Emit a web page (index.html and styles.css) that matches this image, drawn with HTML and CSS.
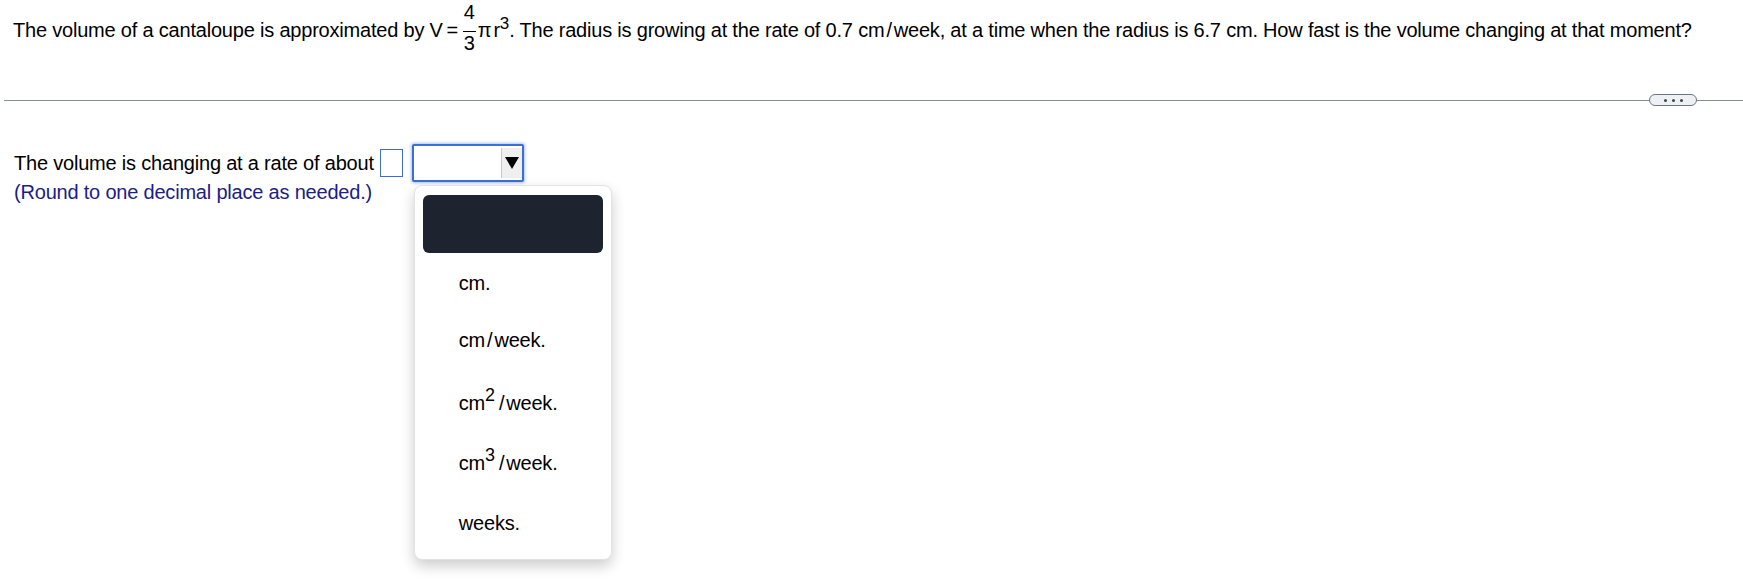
FILE: index.html
```html
<!DOCTYPE html>
<html lang="en">
<head>
<meta charset="UTF-8" />
<title>Related Rates</title>
<link rel="stylesheet" href="styles.css">
</head>
<body>
<div class="question">
  The volume of a cantaloupe is approximated by V&#8201;=&#8201;<span class="frac"><span class="num">4</span><span class="den">3</span></span><span class="pi">&pi;</span>r<sup class="sup">3</sup>. The radius is growing at the rate of 0.7 cm<span class="slash">/</span>week, at a time when the radius is 6.7 cm. How fast is the volume changing at that moment?
</div>

<div class="divider">
  <div class="rule"></div>
  <div class="more"><span></span><span></span><span></span></div>
  <div class="rule rule-end"></div>
</div>

<div class="answer">
  <div class="answer-row">
    <span>The volume is changing at a rate of about</span>
    <span class="blank"></span>
    <div class="select-wrap">
      <div class="select">
        <div class="select-btn"><span class="tri"></span></div>
      </div>
      <div class="menu">
        <div class="menu-active"></div>
        <div class="menu-item">cm.</div>
        <div class="menu-item">cm<span class="slash">/</span>week.</div>
        <div class="menu-item">cm<sup>2</sup><span class="slash">/</span>week.</div>
        <div class="menu-item">cm<sup>3</sup><span class="slash">/</span>week.</div>
        <div class="menu-item">weeks.</div>
      </div>
    </div>
  </div>
  <div class="hint">(Round to one decimal place as needed.)</div>
</div>
</body>
</html>
```

FILE: styles.css
```css
html, body {
  height: 100%;
}

body {
  margin: 0;
  min-height: 583px;
  font-family: "Liberation Sans", Arial, sans-serif;
  font-size: 20px;
  letter-spacing: -0.2px;
  color: #000;
  background: #fff;
}

.question {
  padding: 4px 0 0 13px;
  line-height: 30px;
}

.frac {
  display: inline-flex;
  flex-direction: column;
  align-items: center;
  vertical-align: 18px;
  line-height: 16px;
  margin: 0 1px;
}

.num {
  padding: 0 1px 11px;
  border-bottom: 1px solid #000;
}

.den {
  padding: 3px 1px 0;
}

.pi {
  margin: 0 2px 0 1px;
}

.sup {
  font-size: 17px;
  vertical-align: 8px;
  line-height: 0;
}

.slash {
  margin: 0 2px;
}

.divider {
  display: flex;
  align-items: center;
  margin: 43px 0 0 4px;
}

.rule {
  flex: 1;
  height: 1px;
  background: #868c9a;
}

.rule-end {
  flex: 0 0 46px;
}

.more {
  display: flex;
  justify-content: center;
  align-items: center;
  gap: 5px;
  width: 46px;
  height: 10px;
  border: 1px solid #6c7583;
  border-radius: 6px;
  background: #eef1f4;
}

.more span {
  width: 3px;
  height: 3px;
  border-radius: 50%;
  background: #3d4450;
}

.answer {
  padding-left: 14px;
  margin-top: 38px;
}

.answer-row {
  display: flex;
  align-items: center;
  line-height: 30px;
}

.blank {
  width: 21px;
  height: 26px;
  margin-left: 6px;
  border: 1px solid #3a6fcf;
}

.select-wrap {
  position: relative;
  margin-left: 9px;
}

.select {
  display: flex;
  justify-content: flex-end;
  width: 108px;
  height: 34px;
  border: 2px solid #3d6fd8;
  border-radius: 2px;
  box-shadow: 0 0 3px 1px rgba(70, 120, 230, 0.45);
  background: #fff;
}

.select-btn {
  display: flex;
  justify-content: center;
  align-items: center;
  width: 20px;
  margin: 2px 0;
  background: #efefef;
  border-left: 1px solid #c9c9c9;
}

.tri {
  width: 0;
  height: 0;
  border-left: 7px solid transparent;
  border-right: 7px solid transparent;
  border-top: 12px solid #000;
}

.hint {
  margin-top: -5px;
  line-height: 30px;
  color: #1c1c8a;
}

.menu {
  position: absolute;
  z-index: 2;
  left: 2px;
  top: 41px;
  padding: 9px 8px 6px;
  box-sizing: border-box;
  width: 198px;
  background: #fff;
  border: 1px solid #e3e3e3;
  border-radius: 8px;
  box-shadow: 0 6px 14px rgba(0, 0, 0, 0.2);
}

.menu-active {
  height: 58px;
  border-radius: 6px;
  background: #1e2330;
}

.menu-item {
  height: 60px;
  line-height: 60px;
  padding-left: 36px;
}

.menu-item:nth-child(3) {
  line-height: 54px;
}

.menu-item sup {
  font-size: 18px;
  line-height: 0;
  vertical-align: 9px;
  margin-right: 2px;
}
```
